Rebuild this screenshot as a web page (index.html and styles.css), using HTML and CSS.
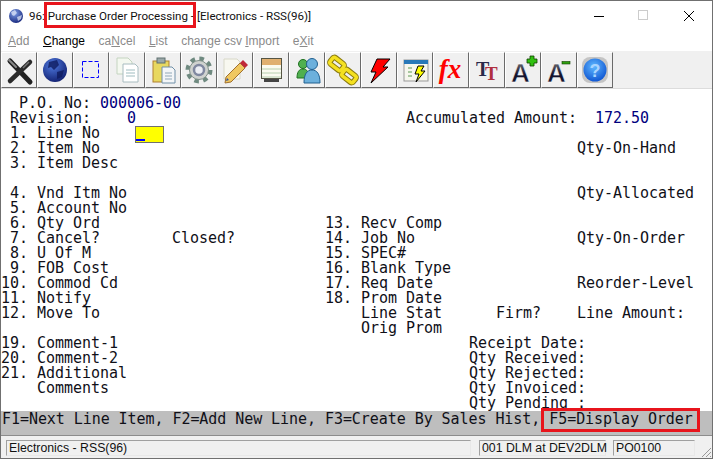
FILE: index.html
```html
<!DOCTYPE html>
<html lang="en">
<head>
<meta charset="utf-8">
<title>Purchase Order Processing</title>
<link rel="stylesheet" href="styles.css">
</head>
<body>
<div class="window">
  <header class="titlebar">
    <svg class="app-icon" width="16" height="16" viewBox="0 0 16 16"><defs><radialGradient id="g0" cx="40%" cy="30%" r="75%"><stop offset="0" stop-color="#7f9fe8"/><stop offset="1" stop-color="#14247a"/></radialGradient></defs><circle cx="8" cy="8" r="7" fill="url(#g0)"/><path d="M3 4l4-2 2 3-3 3-2-1zM9 9l5-2-1 4-3 2z" fill="#dde4f6" opacity=".75"/></svg>
    <span class="title-text">96: Purchase Order Processing - [Electronics - RSS(96)]</span>
    <span class="winbtns">
      <svg width="12" height="12" viewBox="0 0 12 12"><path d="M1 6.500h10" stroke="#000" fill="none"/></svg>
      <svg width="12" height="12" viewBox="0 0 12 12"><rect x=".5" y=".5" width="9" height="9" stroke="#ccc" fill="none"/></svg>
      <svg width="12" height="12" viewBox="0 0 12 12"><path d="M1 1l10 10M11 1L1 11" stroke="#000" fill="none"/></svg>
    </span>
    <span class="redbox title-mark"></span>
  </header>
  <nav class="menubar">
    <span class="m dim"><u>A</u>dd</span>
    <span class="m"><u>C</u>hange</span>
    <span class="m dim">ca<u>N</u>cel</span>
    <span class="m dim"><u>L</u>ist</span>
    <span class="m dim">change csv <u>I</u>mport</span>
    <span class="m dim">e<u>X</u>it</span>
  </nav>
  <div class="toolbar">
    <button class="tb"><svg width="32" height="32" viewBox="0 0 32 32"><path d="M7 7l20 21" stroke="#222" stroke-width="5" stroke-linecap="round"/><path d="M27 8L7 27" stroke="#2a2a2a" stroke-width="4.500" stroke-linecap="round"/><path d="M6 6l7 7" stroke="#888" stroke-width="2" stroke-linecap="round"/><path d="M26 8l-6 6" stroke="#777" stroke-width="1.500"/></svg></button>
    <button class="tb"><svg width="32" height="32" viewBox="0 0 32 32"><defs><radialGradient id="g1" cx="40%" cy="30%" r="75%"><stop offset="0" stop-color="#4f7ae0"/><stop offset="1" stop-color="#101e6e"/></radialGradient></defs><circle cx="16" cy="16" r="12" fill="url(#g1)"/><path d="M10 8l8-2 2 5-5 5-3-3-3 1zM18 18l7-2-2 7-5 2z" fill="#0e1a5e" opacity=".8"/></svg></button>
    <button class="tb"><svg width="32" height="32" viewBox="0 0 32 32"><rect x="7.500" y="7.500" width="16" height="16" fill="none" stroke="#00f" stroke-dasharray="4 2"/></svg></button>
    <button class="tb"><svg width="32" height="32" viewBox="0 0 32 32"><path d="M6 4h11l4 4v12H6z" fill="#f4f8f0" stroke="#c4d4c0"/><path d="M12 10h12l3 3v15H12z" fill="#fff" stroke="#a8bcc0"/><path d="M15 16h9M15 19h9M15 22h9" stroke="#9fbcc0"/></svg></button>
    <button class="tb"><svg width="32" height="32" viewBox="0 0 32 32"><rect x="6" y="7" width="16" height="21" fill="#e8d860" stroke="#b08030"/><rect x="10" y="4" width="8" height="5" fill="#9aa8a8" stroke="#607070"/><path d="M15 13h10l3 3v13H15z" fill="#f4f6f8" stroke="#7090a8"/><path d="M18 19h7M18 22h7M18 25h7" stroke="#90a8b8"/></svg></button>
    <button class="tb"><svg width="32" height="32" viewBox="0 0 32 32"><circle cx="16" cy="16" r="10.500" fill="none" stroke="#6f8a80" stroke-width="6" stroke-dasharray="4.200 4.050"/><circle cx="16" cy="16" r="9.500" fill="#cfd2cf" stroke="#7f9088"/><circle cx="16" cy="16" r="5" fill="#eceef4" stroke="#8088a0" stroke-width="2.500"/></svg></button>
    <button class="tb"><svg width="32" height="32" viewBox="0 0 32 32"><path d="M5 5h13l3 3v17H5z" fill="#f8f8f0" stroke="#d8d8c8"/><path d="M7 23L21 9l5 5-14 14-6 1z" fill="#f0c860" stroke="#a07030"/><path d="M21 9l3-3 5 5-3 3z" fill="#c02838"/><path d="M7 27l1-3 2 2z" fill="#3050a0"/></svg></button>
    <button class="tb"><svg width="32" height="32" viewBox="0 0 32 32"><rect x="6.500" y="4.500" width="20" height="20" fill="#fbfbf0" stroke="#554"/><rect x="7" y="5" width="19" height="6" fill="#e0b070"/><path d="M7 15h19M7 19h19M7 23h19" stroke="#b8d0b0"/><rect x="9" y="25" width="15" height="3" fill="#444"/></svg></button>
    <button class="tb"><svg width="32" height="32" viewBox="0 0 32 32"><circle cx="12" cy="10" r="4.500" fill="#50b050" stroke="#207020"/><path d="M6 24c0-6 2-9 6-9s6 3 6 9z" fill="#50b050" stroke="#207020"/><circle cx="21" cy="10" r="5.500" fill="#6cb0dc" stroke="#206090"/><path d="M13 29c0-9 3-13 8-13s8 4 8 13z" fill="#6cb0dc" stroke="#206090"/></svg></button>
    <button class="tb"><svg width="32" height="32" viewBox="0 0 32 32"><g fill="none" stroke="#8a7a10" stroke-width="5.500"><rect x="3" y="6" width="14" height="8" rx="2" transform="rotate(38 10 10)"/><rect x="15" y="18" width="14" height="8" rx="2" transform="rotate(38 22 22)"/></g><g fill="none" stroke="#f4e020" stroke-width="3.500"><rect x="3" y="6" width="14" height="8" rx="2" transform="rotate(38 10 10)"/><rect x="15" y="18" width="14" height="8" rx="2" transform="rotate(38 22 22)"/></g></svg></button>
    <button class="tb"><svg width="32" height="32" viewBox="0 0 32 32"><path d="M14 5h13l-7 8h5L8 29l5-11H8z" fill="#f00" stroke="#000"/></svg></button>
    <button class="tb"><svg width="32" height="32" viewBox="0 0 32 32"><rect x="5" y="6" width="24" height="21" fill="#f6f6ee" stroke="#999"/><rect x="5" y="6" width="24" height="4" fill="#2878b8"/><path d="M9 14h4M9 18h4M9 22h4" stroke="#a8c8a0" stroke-width="2"/><path d="M19 12h6l-3 5h4l-9 11 3-8h-4z" fill="#ff0" stroke="#000"/></svg></button>
    <button class="tb"><svg width="32" height="32" viewBox="0 0 32 32"><text class="fx" x="15" y="24" text-anchor="middle">fx</text></svg></button>
    <button class="tb"><svg width="32" height="32" viewBox="0 0 32 32"><text class="tt1" x="5" y="22">T</text><text class="tt2" x="14" y="26">T</text></svg></button>
    <button class="tb"><svg width="32" height="32" viewBox="0 0 32 32"><defs><linearGradient id="ga" x1="0" y1="0" x2="0" y2="1"><stop offset="0" stop-color="#8a8a8a"/><stop offset=".55" stop-color="#14142e"/></linearGradient></defs><text class="aa" x="4" y="28">A</text><path d="M20 5h3v-3h4v3h3v4h-3v3h-4v-3h-3z" fill="#30c010" stroke="#104000" stroke-width=".8"/></svg></button>
    <button class="tb"><svg width="32" height="32" viewBox="0 0 32 32"><text class="aa" x="4" y="28">A</text><rect x="19" y="7.500" width="8" height="2.500" fill="#30a010" stroke="#104000" stroke-width=".6"/></svg></button>
    <button class="tb"><svg width="32" height="32" viewBox="0 0 32 32"><defs><radialGradient id="g2" cx="45%" cy="35%" r="70%"><stop offset="0" stop-color="#60b8ff"/><stop offset="1" stop-color="#0a50d0"/></radialGradient></defs><rect x="3" y="3" width="26" height="26" rx="8" fill="#c4c4c4"/><circle cx="16" cy="16" r="11.500" fill="url(#g2)"/><text class="qm" x="16" y="23" text-anchor="middle">?</text></svg></button>
  </div>
  <main class="screen"><pre class="term">  P.O. No: <b>000006-00</b>
 Revision:    <b>0</b>                              Accumulated Amount:  <b>172.50</b>
 1. Line No    <span class="input"><i></i></span>
 2. Item No                                                     Qty-On-Hand
 3. Item Desc

 4. Vnd Itm No                                                  Qty-Allocated
 5. Account No
 6. Qty Ord                         13. Recv Comp
 7. Cancel?        Closed?          14. Job No                  Qty-On-Order
 8. U Of M                          15. SPEC#
 9. FOB Cost                        16. Blank Type
10. Commod Cd                       17. Req Date                Reorder-Level
11. Notify                          18. Prom Date
12. Move To                             Line Stat      Firm?    Line Amount:
                                        Orig Prom
19. Comment-1                                       Receipt Date:
20. Comment-2                                       Qty Received:
21. Additional                                      Qty Rejected:
    Comments                                        Qty Invoiced:
                                                    Qty Pending :</pre></main>
  <div class="fkeys"><span class="fkeys-text">F1=Next Line Item, F2=Add New Line, F3=Create By Sales Hist, F5=Display Order</span><span class="redbox fkey-mark"></span></div>
  <footer class="status">
    <span class="cell c1">Electronics - RSS(96)</span>
    <span class="cell c2">001 DLM at DEV2DLM</span>
    <span class="cell c3">PO0100</span>
    <svg class="grip" width="12" height="12" viewBox="0 0 12 12"><path d="M11 2L2 11M11 6L6 11M11 10L10 11" stroke="#999" fill="none"/></svg>
  </footer>
</div>
</body>
</html>
```
FILE: styles.css
```css
* { box-sizing: border-box; }
html, body { margin: 0; padding: 0; }
body { width: 713px; height: 459px; overflow: hidden; background: #fff; font-family: "Liberation Sans", Arial, sans-serif; }
.window { position: relative; width: 713px; height: 459px; display: flex; flex-direction: column; border: 1px solid #707070; }
.titlebar { height: 32px; flex: none; display: flex; align-items: center; padding: 0 0 2px 7px; background: #fff; color: #111; }
.app-icon { margin-right: 5px; flex: none; }
.title-text { white-space: pre; font-family: Roboto, "Liberation Sans", sans-serif; font-size: 11.6px; }
.winbtns { margin-left: auto; display: flex; gap: 33px; padding-right: 17px; }
.redbox { position: absolute; border: 3px solid #e8141c; pointer-events: none; }
.title-mark { left: 43px; top: 1px; width: 152px; height: 26px; }
.fkey-mark { left: 540px; top: -3px; width: 159px; height: 24px; }
.menubar { height: 18px; flex: none; display: flex; padding: 0 0 0 7px; gap: 13.6px; font-size: 12px; line-height: 16px; background: #fff; color: #000; }
.m.dim { color: #8a8a8a; }
.toolbar { height: 38px; flex: none; display: flex; background: #f0f0f0; padding: 1px 0 0 0; border-bottom: 1px solid #dcdcdc; }
.tb { width: 36px; height: 36px; flex: none; padding: 0; margin: 0; display: flex; align-items: center; justify-content: center; background: #f0f0f0; border: 1px solid; border-color: #fff #6a6a6a #6a6a6a #fff; }
.tb svg { overflow: visible; }
.fx { font: italic bold 27px "Liberation Serif", serif; fill: #f00; }
.tt1 { font: bold 20px "Liberation Serif", serif; fill: #2a2a4a; }
.tt2 { font: bold 19px "Liberation Serif", serif; fill: #b03040; }
.aa { font: bold 26px "Liberation Sans", sans-serif; fill: url(#ga); stroke: #fff; stroke-width: .5px; }
.qm { font: bold 18px "Liberation Sans", sans-serif; fill: #a8d4ff; }
.screen { flex: 1; min-height: 0; background: #fff; padding: 7px 0 0 0; overflow: hidden; }
.term { margin: 0; font-family: "DejaVu Sans Mono", monospace; font-size: 15px; line-height: 15px; letter-spacing: -.03px; color: #101018; }
.term b { font-weight: normal; color: #00007e; }
.input { display: inline-block; position: relative; width: 29px; height: 17px; margin: 0 0 -2px -1px; vertical-align: top; background: #ff0; border: 1px solid #707070; }
.input i { position: absolute; left: 0; bottom: 1px; width: 9px; height: 2px; background: #00f; }
.fkeys { position: relative; height: 24px; flex: none; padding: 1px 0 0 1px; background: #bebebe; font-family: "DejaVu Sans Mono", monospace; font-size: 15px; line-height: 15px; letter-spacing: -.06px; color: #101018; white-space: pre; }
.status { height: 23px; flex: none; display: flex; align-items: center; position: relative; padding: 3px 0 2px 5px; background: #f0f0f0; border-top: 1px solid #8c8c8c; font-size: 12.3px; }
.cell { height: 16px; line-height: 14px; padding-left: 2px; border: 1px solid; border-color: #a0a0a0 #e8e8e8 #e8e8e8 #a0a0a0; color: #111; white-space: nowrap; }
.c1 { width: 465px; }
.c2 { width: 127px; margin-left: 8px; }
.c3 { width: 82px; margin-left: 7px; }
.grip { position: absolute; right: 0; bottom: 0; }
```
